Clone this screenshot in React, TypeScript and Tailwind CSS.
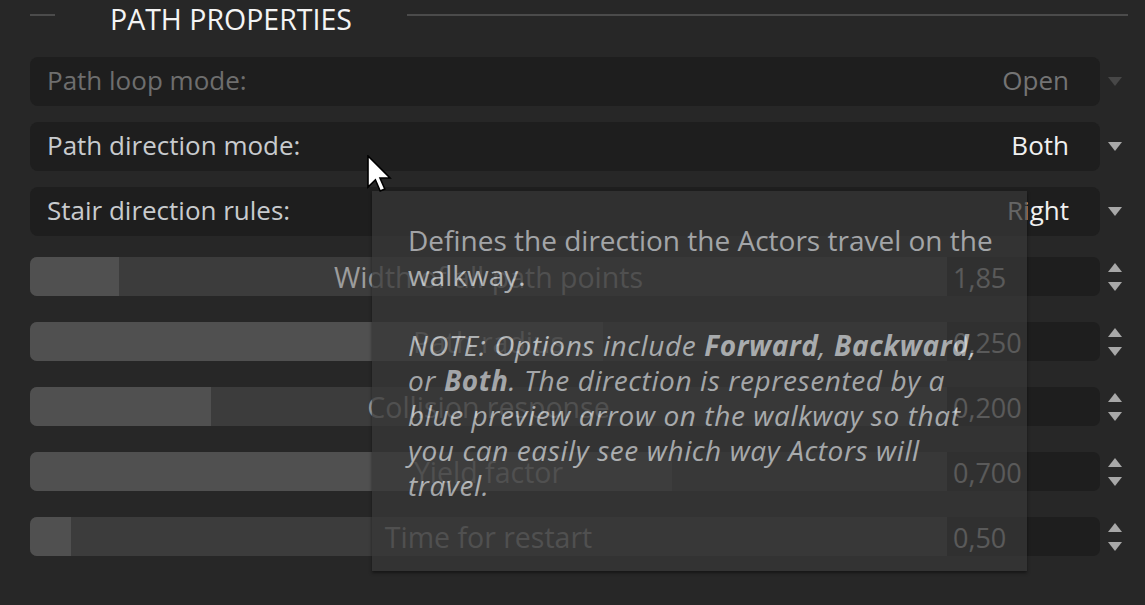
import React from "react";

const Tri = ({ up = false, color }: { up?: boolean; color: string }) => (
  <svg width="14" height="9" viewBox="0 0 14 9" className="block">
    {up ? <polygon points="7,0 14,9 0,9" fill={color} /> : <polygon points="0,0 14,0 7,9" fill={color} />}
  </svg>
);

const Dropdown = ({ label, value, disabled }: { label: string; value: string; disabled?: boolean }) => (
  <div className="flex items-center">
    <div className="w-[1070px] h-[49px] rounded-[8px] bg-[#1e1e1e] flex items-center justify-between pl-[17px] pr-[31px] pb-[3px] text-[26px]">
      <span className={disabled ? "text-[#6e6e6e]" : "text-[#c8cbce]"}>{label}</span>
      <span className={disabled ? "text-[#747474]" : "text-[#f0f0f0]"}>{value}</span>
    </div>
    <div className="w-[45px] flex pl-[8px]">
      <Tri color={disabled ? "#474747" : "#a8a8a8"} />
    </div>
  </div>
);

const Slider = ({ label, value, fill }: { label: string; value: string; fill: number }) => (
  <div className="flex items-center">
    <div className="w-[917px] h-[39px] rounded-l-[7px] overflow-hidden bg-[#3c3c3c] grid">
      <div className="[grid-area:1/1] h-full bg-[#505050]" style={{ width: fill }} />
      <div className="[grid-area:1/1] flex items-center justify-center text-[#9c9c9c] text-[28.5px]">{label}</div>
    </div>
    <div className="w-[153px] h-[39px] rounded-r-[7px] bg-[#1e1e1e] flex items-center pl-[6px] pt-[2px] text-[#c4c4c4] text-[27px]">{value}</div>
    <div className="w-[45px] flex flex-col pl-[8px] gap-[10px]">
      <Tri up color="#a8a8a8" />
      <Tri color="#a8a8a8" />
    </div>
  </div>
);

export default function App() {
  return (
    <div className="w-[1145px] h-[605px] bg-[#272727] relative overflow-hidden font-['Open_Sans',sans-serif] text-[25px] leading-[34px]">
      <div className="h-[38px] flex items-start pl-[30px] pr-[17px]">
        <div className="w-[25px] h-[2px] mt-[14px] bg-[#4b4b4b]" />
        <div className="ml-[55px] text-[#f4f4f4] text-[28.5px] leading-[38px] whitespace-nowrap">PATH PROPERTIES</div>
        <div className="ml-[55px] flex-1 h-[2px] mt-[14px] bg-[#4b4b4b]" />
      </div>
      <div className="mt-[19px] pl-[30px] flex flex-col gap-[16px]">
        <Dropdown label="Path loop mode:" value="Open" disabled />
        <Dropdown label="Path direction mode:" value="Both" />
        <Dropdown label="Stair direction rules:" value="Right" />
      </div>
      <div className="mt-[21px] pl-[30px] flex flex-col gap-[26px]">
        <Slider label="Width of all path points" value="1,85" fill={89} />
        <Slider label="Path radius" value="0,250" fill={573} />
        <Slider label="Collision response" value="0,200" fill={181} />
        <Slider label="Yield factor" value="0,700" fill={642} />
        <Slider label="Time for restart" value="0,50" fill={41} />
      </div>

      <div className="absolute left-[372px] top-[191px] w-[655px] h-[380px] bg-[#373737] opacity-75 shadow-[0_2px_3px_rgba(0,0,0,0.6)] pl-[36px] pt-[32px] text-[#cdd0d3] text-[28px] leading-[35px] whitespace-nowrap">
        <p>
          Defines the direction the Actors travel on the
          <br />
          walkway.
        </p>
        <p className="mt-[35px] italic tracking-[0.6px]">
          NOTE: Options include <b>Forward</b>, <b>Backward</b>,
          <br />
          or <b>Both</b>. The direction is represented by a
          <br />
          blue preview arrow on the walkway so that
          <br />
          you can easily see which way Actors will
          <br />
          travel.
        </p>
      </div>

      <svg className="absolute left-[367px] top-[155px]" width="26" height="38" viewBox="0 0 13 19">
        <path d="M0.5 0.5 L0.5 16 L4.2 12.4 L6.6 18 L8.9 17 L6.5 11.5 L11.5 11.5 Z" fill="#fff" stroke="#000" strokeWidth="0.8" strokeLinejoin="miter" />
      </svg>
    </div>
  );
}
